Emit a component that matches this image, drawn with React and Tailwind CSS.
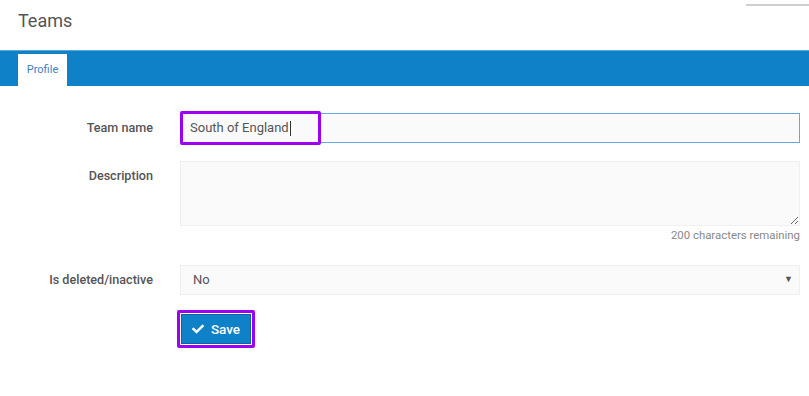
import { FaCheck } from 'react-icons/fa';

export default function App() {
  return (
    <div className="relative w-[809px] h-[396px] bg-white font-['Roboto','Liberation_Sans',sans-serif] text-[#555]">
      {/* top right divider */}
      <div className="absolute top-[4px] right-0 w-[63px] h-[2px] bg-[#cfcfcf]" />

      {/* Header */}
      <div className="h-[50px] pl-[18px] pt-[9px]">
        <h1 className="text-[18px] leading-[24px] text-[#555]">Teams</h1>
      </div>

      {/* Tab bar */}
      <div className="h-[36px] bg-[#0e81c8] border-t border-[#5aa8da] flex items-end pl-[18px]">
        <div className="w-[49px] h-[32px] bg-white flex items-center justify-center text-[11px] text-[#3f7fc4]">
          Profile
        </div>
      </div>

      {/* Form */}
      <div className="pt-[27px] pr-[9px]">
        {/* Team name */}
        <div className="flex items-center">
          <label className="w-[153px] text-right text-[12.6px] font-medium text-[#555]">Team name</label>
          <div className="relative ml-[27px] flex-1">
            <div className="h-[30px] bg-[#fafafa] border border-[#66a9dc] flex items-center pl-[9px] text-[13px] text-[#555]">
              South of England<span className="inline-block w-px h-[15px] bg-[#333] ml-px" />
            </div>
            <div className="absolute -top-[2px] left-0 w-[141px] h-[34px] border-[3px] border-[#9b00f5] rounded-[2px]" />
          </div>
        </div>

        {/* Description */}
        <div className="flex mt-[18px]">
          <label className="w-[153px] text-right text-[12.6px] font-medium text-[#555] pt-[6px]">Description</label>
          <div className="ml-[27px] flex-1">
            <textarea className="block w-full h-[65px] bg-[#fafafa] border border-[#efefef] resize-y outline-none" />
            <div className="text-right text-[11.4px] leading-[16px] text-[#888] mt-[1px]">200 characters remaining</div>
          </div>
        </div>

        {/* Is deleted */}
        <div className="flex items-center mt-[22px]">
          <label className="w-[153px] text-right text-[12.6px] font-medium text-[#555]">Is deleted/inactive</label>
          <div className="ml-[27px] flex-1 h-[30px] bg-[#fafafa] border border-[#efefef] flex items-center justify-between pl-[12px] pr-[6px] text-[13px] text-[#555]">
            <span>No</span>
            <span className="text-[9px] text-[#555]">▼</span>
          </div>
        </div>

        {/* Save */}
        <div className="ml-[177px] mt-[15px]">
          <div className="inline-block border-[3px] border-[#9b00f5] rounded-[2px] p-px">
            <button className="w-[70px] h-[30px] bg-[#0e81c8] border border-[#0b679f] flex items-center justify-center gap-[7px] text-white text-[13.5px] font-medium">
              <FaCheck className="w-[12px] h-[12px]" />
              Save
            </button>
          </div>
        </div>
      </div>
    </div>
  );
}
